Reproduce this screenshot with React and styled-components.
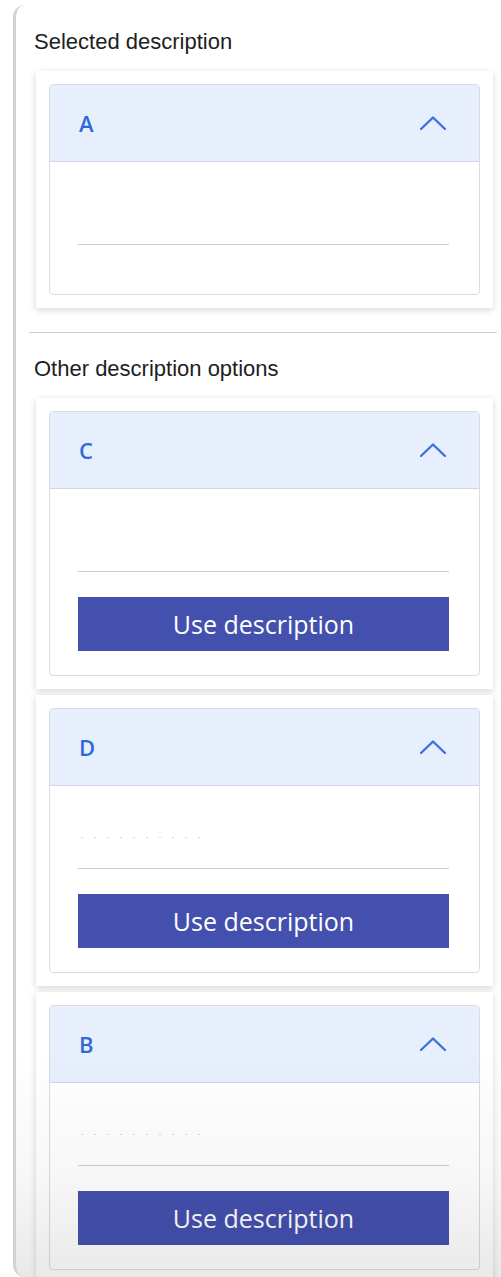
import React from 'react';
import styled, { createGlobalStyle } from 'styled-components';

const GlobalStyle = createGlobalStyle`
  html, body {
    margin: 0;
    padding: 0;
    background: #ffffff;
  }
  body {
    font-family: "Liberation Sans", Arial, sans-serif;
    overflow: hidden;
  }
`;

const Panel = styled.div`
  position: relative;
  margin: 5px 0 0 13px;
  height: 1272px;
  box-sizing: border-box;
  border-left: 3px solid #d2d2d2;
  border-radius: 12px 0 0 12px;
  padding: 24px 4px 0 13px;
  overflow: hidden;
  background: #ffffff;
`;

const FadeOverlay = styled.div`
  position: absolute;
  left: 0;
  right: 0;
  bottom: 0;
  height: 230px;
  pointer-events: none;
  background: linear-gradient(to bottom, rgba(0, 0, 0, 0) 0%, rgba(0, 0, 0, 0.03) 55%, rgba(0, 0, 0, 0.085) 100%);
`;

const Heading = styled.h2`
  margin: 0 0 16px 5px;
  font-family: "Liberation Sans", Arial, sans-serif;
  font-size: 22px;
  line-height: 26px;
  font-weight: 400;
  color: #1e1e1e;
`;

const Separator = styled.hr`
  margin: 24px 0 23px 0;
  border: 0;
  border-top: 1px solid #cfcfcf;
  height: 0;
`;

const CardList = styled.div`
  display: flex;
  flex-direction: column;
  gap: 6px;
`;

const OuterCard = styled.div`
  margin: 0 4px 0 7px;
  padding: 13px;
  background: #ffffff;
  box-shadow: 0 2px 7px rgba(0, 0, 0, 0.16);
`;

const InnerCard = styled.div`
  border: 1px solid #dcdcdc;
  border-radius: 4px;
  overflow: hidden;
  background: #ffffff;
`;

const Header = styled.div`
  display: flex;
  align-items: center;
  justify-content: space-between;
  height: 76px;
  padding: 0 33px 0 29px;
  background: #e8effc;
  border-bottom: 1px solid #cdd7e8;
`;

const Letter = styled.span`
  font-family: "Open Sans", "Noto Sans", sans-serif;
  font-size: 22px;
  font-weight: 600;
  color: #2e69dc;
`;

const Chevron = styled.svg`
  display: block;
  width: 26px;
  height: 14px;
`;

const Body = styled.div`
  padding: 0 30px ${(p) => (p.$hasButton ? '24px' : '49px')} 28px;
`;

const Field = styled.div`
  height: 82px;
  box-sizing: content-box;
  display: flex;
  align-items: flex-end;
  padding-left: 3px;
  border-bottom: 1px solid #cccccc;
`;

const Placeholder = styled.span`
  display: block;
  width: 128px;
  height: 1px;
  margin-bottom: 30px;
  background: repeating-linear-gradient(to right, #d8d8d8 0 2px, transparent 2px 13px);
`;

const UseButton = styled.button`
  display: block;
  width: 100%;
  height: 54px;
  margin-top: 25px;
  border: 0;
  border-radius: 0;
  background: #4450ae;
  color: #ffffff;
  font-family: "Open Sans", "Noto Sans", sans-serif;
  font-size: 25px;
  font-weight: 500;
  cursor: pointer;
`;

const ChevronUp = () => (
  <Chevron viewBox="0 0 26 14">
    <polyline points="1,13 13,1.5 25,13" fill="none" stroke="#3c72e0" strokeWidth="2.4" strokeLinecap="round" strokeLinejoin="round" />
  </Chevron>
);

const DescriptionCard = ({ letter, dotted, hasButton }) => (
  <OuterCard>
    <InnerCard>
      <Header>
        <Letter>{letter}</Letter>
        <ChevronUp />
      </Header>
      <Body $hasButton={hasButton}>
        <Field>{dotted && <Placeholder />}</Field>
        {hasButton && <UseButton type="button">Use description</UseButton>}
      </Body>
    </InnerCard>
  </OuterCard>
);

const options = [
  { letter: 'C', dotted: false },
  { letter: 'D', dotted: true },
  { letter: 'B', dotted: true },
];

export default function App() {
  return (
    <>
      <GlobalStyle />
      <Panel>
        <Heading>Selected description</Heading>
        <DescriptionCard letter="A" />
        <Separator />
        <Heading>Other description options</Heading>
        <CardList>
          {options.map((o) => (
            <DescriptionCard key={o.letter} letter={o.letter} dotted={o.dotted} hasButton />
          ))}
        </CardList>
        <FadeOverlay />
      </Panel>
    </>
  );
}
